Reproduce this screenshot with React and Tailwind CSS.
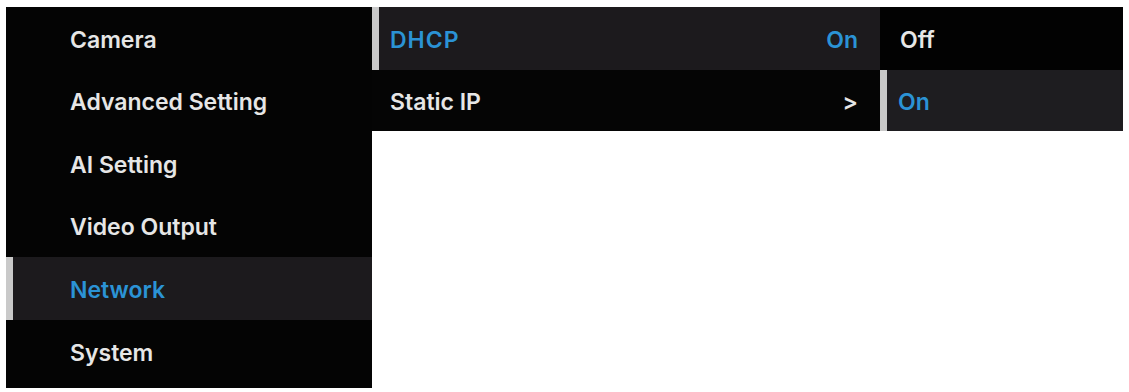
import React from 'react';

const leftItems = ['Camera', 'Advanced Setting', 'AI Setting', 'Video Output', 'Network', 'System'];

const Row = ({ active, className = '', children }) => (
  <div className={`relative flex items-center pt-[3px] ${active ? 'bg-[#1c1a1d]' : ''} ${className}`}>
    {active && <span className="absolute left-0 top-0 bottom-0 w-[7px] bg-[#c9c9c9]" />}
    {children}
  </div>
);

const App = () => {
  return (
    <div
      className="w-[1129px] h-[392px] bg-white pt-[7px] pl-[6px] flex items-start text-[23px] font-semibold text-[#e6e6e6]"
      style={{ fontFamily: 'Inter, "Liberation Sans", sans-serif' }}
    >
      {/* main menu */}
      <div className="w-[366px] h-[381px] bg-[#040404] pb-[5px]">
        {leftItems.map((item) => (
          <Row key={item} active={item === 'Network'} className="h-[62.6px] pl-[64px]">
            <span className={item === 'Network' ? 'text-[#2b93d5]' : ''}>{item}</span>
          </Row>
        ))}
      </div>

      {/* network submenu */}
      <div className="w-[508px] bg-[#050505]">
        <Row active className="h-[63px] pl-[18px] pr-[22px] justify-between">
          <span className="text-[#2b93d5] tracking-[1px]">DHCP</span>
          <span className="text-[#2b93d5]">On</span>
        </Row>
        <Row className="h-[61px] pl-[18px] pr-[22px] justify-between">
          <span>Static IP</span>
          <span>&gt;</span>
        </Row>
      </div>

      {/* options */}
      <div className="w-[243px] bg-[#020202]">
        <Row className="h-[63px] pl-[20px]">
          <span>Off</span>
        </Row>
        <Row active className="h-[61px] pl-[18px] !bg-[#1e1d20]">
          <span className="text-[#2b93d5]">On</span>
        </Row>
      </div>
    </div>
  );
};

export default App;
